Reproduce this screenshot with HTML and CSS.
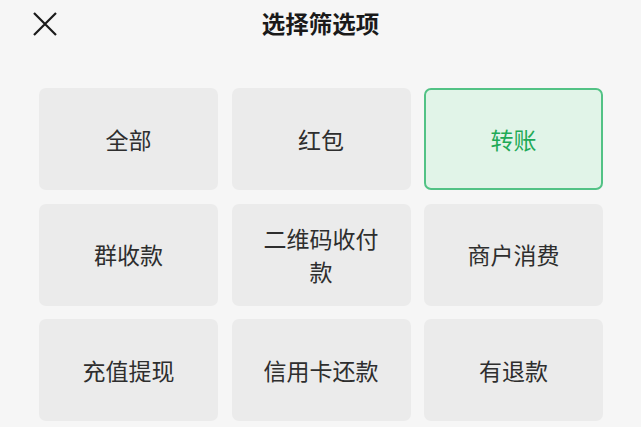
FILE: index.html
```html
<!DOCTYPE html>
<html lang="zh-CN">
<head>
  <meta charset="UTF-8" />
  <meta name="viewport" content="width=device-width, initial-scale=1.0"/>
  <title>选择筛选项</title>
  <link rel="stylesheet" href="styles.css">
</head>
<body>
  <div class="sheet">
    <div class="header">
      <button class="close-btn" aria-label="关闭">
        <svg width="24" height="24" viewBox="0 0 24 24">
          <path d="M1 1 L23 23 M23 1 L1 23" stroke="#1a1a1a" stroke-width="2.2" fill="none"/>
        </svg>
      </button>
      <h1>选择筛选项</h1>
    </div>
    <div class="options">
      <div class="option">全部</div>
      <div class="option">红包</div>
      <div class="option selected">转账</div>
      <div class="option">群收款</div>
      <div class="option">二维码收付款</div>
      <div class="option">商户消费</div>
      <div class="option">充值提现</div>
      <div class="option">信用卡还款</div>
      <div class="option">有退款</div>
    </div>
  </div>
</body>
</html>
```

FILE: styles.css
```css
html, body {
  margin: 0;
  padding: 0;
  height: 100%;
  overflow: hidden;
  background: #f6f6f6;
  font-family: "Noto Sans CJK SC", "Noto Sans", sans-serif;
  color: #2a2a2a;
}
.sheet {
  width: 641px;
  height: 427px;
}
.header {
  position: relative;
  height: 88px;
}
.close-btn {
  position: absolute;
  left: 33px;
  top: 11.5px;
  width: 24px;
  height: 24px;
  padding: 0;
  border: none;
  background: none;
}
h1 {
  margin: 0;
  padding-top: 5px;
  font-size: 23.5px;
  font-weight: bold;
  line-height: 36px;
  text-align: center;
  color: #1a1a1a;
}
.options {
  display: grid;
  grid-template-columns: repeat(3, 179px);
  grid-auto-rows: 102px;
  gap: 13.5px;
  padding-left: 39px;
}
.option {
  display: flex;
  align-items: center;
  justify-content: center;
  padding: 0 24px;
  background: #ebebeb;
  border-radius: 7px;
  font-size: 23px;
  line-height: 33px;
  text-align: center;
  color: #2e2e2e;
}
.option.selected {
  background: #e1f4e8;
  border: 2px solid #52c285;
  color: #1faa57;
}
```
